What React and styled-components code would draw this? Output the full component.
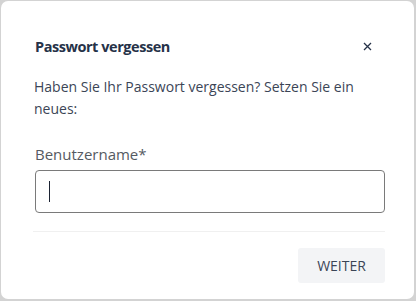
import React from "react";
import styled, { createGlobalStyle } from "styled-components";

const Global = createGlobalStyle`
  html, body { margin: 0; padding: 0; background: #d3d3d3; }
  body { font-family: "Open Sans", "Noto Sans", sans-serif; }
  #root { padding: 1px 2px 2px 1px; }
  * { box-sizing: border-box; }
`;

const Card = styled.div`
  width: 413px;
  height: 298px;
  background: #fff;
  border-radius: 7px;
  padding: 30px 31px 0 33px;
  display: flex;
  flex-direction: column;
`;

const Header = styled.div`
  display: flex;
  align-items: center;
  justify-content: space-between;
  height: 30px;
`;

const Title = styled.h2`
  margin: 0 0 0 1px;
  font-size: 14.5px;
  font-weight: 700;
  color: #263248;
  letter-spacing: -0.45px;
`;

const Close = styled.button`
  border: 0;
  background: transparent;
  padding: 0;
  width: 16px;
  height: 16px;
  margin-right: 8px;
  display: flex;
  align-items: center;
  justify-content: center;
  cursor: pointer;
`;

const Text = styled.p`
  margin: 15px 0 0;
  font-size: 14px;
  line-height: 22px;
  color: #3b4556;
  width: 340px;
`;

const Label = styled.label`
  display: block;
  margin: 23px 0 0 1px;
  font-size: 15px;
  line-height: 22px;
  color: #555a62;
`;

const Input = styled.div`
  margin: 5px 0 0 1px;
  width: 350px;
  height: 43px;
  border: 1px solid #7a7a7a;
  border-radius: 4px;
  display: flex;
  align-items: center;
  padding-left: 13px;
`;

const Caret = styled.span`
  width: 1px;
  height: 21px;
  background: #1c2333;
`;

const Divider = styled.div`
  margin-top: 18px;
  margin-left: -1px;
  width: 352px;
  height: 1px;
  background: #f0f0f0;
`;

const Footer = styled.div`
  display: flex;
  justify-content: flex-end;
  padding-top: 16px;
  width: 351px;
`;

const Button = styled.button`
  border: 0;
  background: #f3f4f6;
  border-radius: 3px;
  width: 87px;
  height: 35px;
  font-family: inherit;
  font-size: 14px;
  color: #3b4556;
  cursor: pointer;
`;

export default function App() {
  return (
    <>
      <Global />
      <Card>
        <Header>
          <Title>Passwort vergessen</Title>
          <Close aria-label="close">
            <svg width="9" height="9" viewBox="0 0 9 9">
              <path d="M1 1L8 8M8 1L1 8" stroke="#263248" strokeWidth="1.3" />
            </svg>
          </Close>
        </Header>
        <Text>Haben Sie Ihr Passwort vergessen? Setzen Sie ein neues:</Text>
        <Label>Benutzername*</Label>
        <Input>
          <Caret />
        </Input>
        <Divider />
        <Footer>
          <Button>WEITER</Button>
        </Footer>
      </Card>
    </>
  );
}
